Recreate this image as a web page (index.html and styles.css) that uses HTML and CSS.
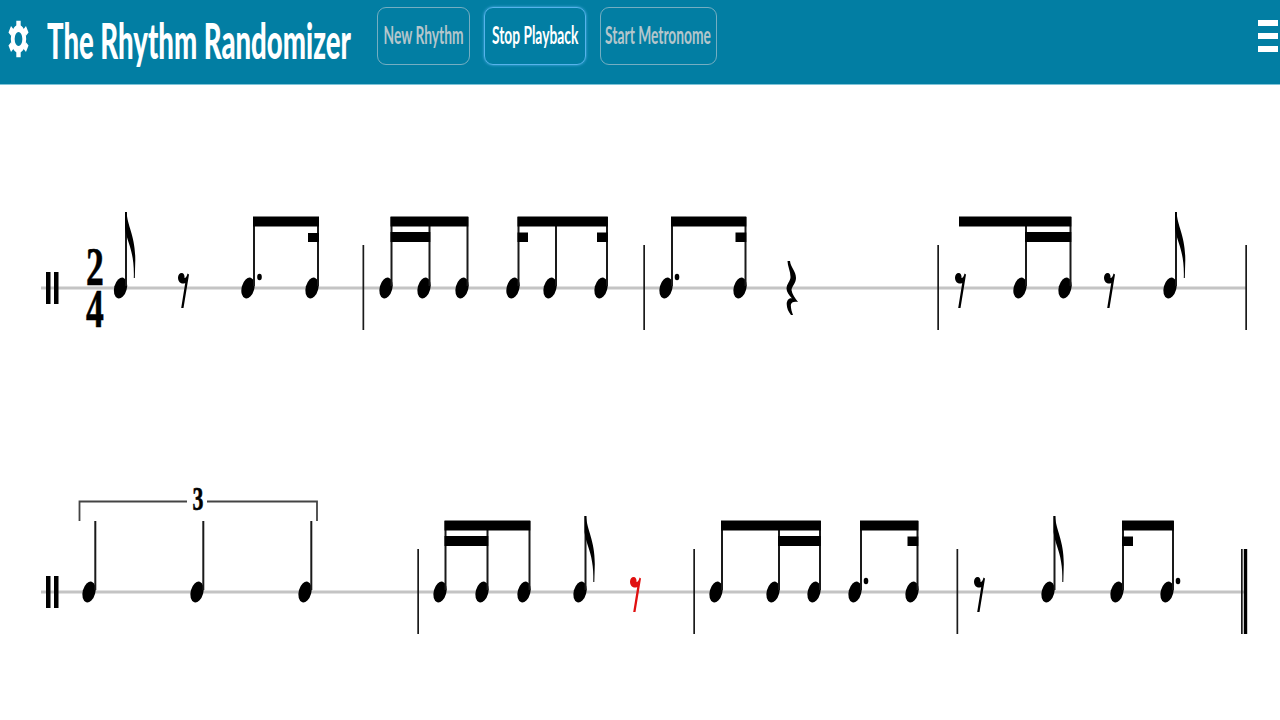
FILE: index.html
```html
<!DOCTYPE html>
<html lang="en">
<head>
    <meta charset="UTF-8">
    <meta name="viewport" content="width=device-width, initial-scale=1.0">
    <title>The Rhythm Randomizer</title>

    <link rel="stylesheet" href="styles.css">
</head>

<body>

<header class="topbar">
    <svg class="gear" viewBox="0 0 24 24" preserveAspectRatio="none">
        <circle cx="12" cy="12" r="6.6" fill="none" stroke="#fff" stroke-width="4.4"/>
        <path d="M12 4V.5M12 20v3.5M18.9 8l3.1-2.2M5.1 16L2 18.200M18.900 16l3.100 2.200M5.100 8L2 5.800" stroke="#fff" stroke-width="5" fill="none"/>
    </svg>
    <h1 class="title"><span>The Rhythm Randomizer</span></h1>
    <div class="actions">
        <button class="btn btn-new" type="button"><span>New Rhythm</span></button>
        <button class="btn btn-stop" type="button"><span>Stop Playback</span></button>
        <button class="btn btn-metro" type="button"><span>Start Metronome</span></button>
    </div>
    <div class="menu"><i></i><i></i><i></i></div>
</header>

<main>
<svg class="score" viewBox="0 85 1280 635">
    <defs>
        <ellipse id="head" cx="0" cy="0" rx="6.300" ry="10.600" transform="rotate(15)"/>
        <path id="flag" d="M-.8 0H.8C1.500 14 9.500 24 9.500 48L9 66H8C8.500 50 6 40 3 31 1.500 26 0 22 -.8 16Z"/>
        <path id="rest8" d="M0 4.500C0 1.800 1.800 0 3.500 0 5.800 0 6.800 2 6.500 5 7.800 5 9 3 9.500 .5L11 1.500 5.500 35H3.200L7.200 10C5 11.500 0 10.500 0 4.500Z"/>
        <path id="rest4" d="M.5 0L3 0C3.500 6 9 10 9 17 9 22 5 25 4.500 29 5 33 8 37 11 41 7.500 40 4 41 3.800 44 3.800 48 5 51 6 54H4C1.500 51 -.3 47 -.3 43 -.3 39 2.500 36.500 5 37.500 2 34 -.5 31 -.5 27.500 -.5 23 3.500 20 3.500 16 3.500 10 .5 5 .5 0Z"/>
        <g id="repeat">
            <rect x="46" y="272" width="4.500" height="32"/>
            <rect x="54" y="272" width="4.500" height="32"/>
        </g>
        <ellipse id="dot" cx="0" cy="0" rx="2.300" ry="3.200"/>
    </defs>

    <!-- first line -->
    <g class="line">
        <rect class="staff" x="41" y="286.500" width="1205" height="3"/>
        <use href="#repeat"/>
        <text class="digit" transform="translate(95,285) scale(.66,1)">2</text>
        <text class="digit" transform="translate(95,327) scale(.66,1)">4</text>

        <use href="#head" x="120.500" y="288"/>
        <rect class="stem" x="125" y="212" height="74"/>
        <use href="#flag" x="125.800" y="212"/>
        <use href="#rest8" x="178" y="273"/>

        <use href="#head" x="248" y="288"/><use href="#dot" x="259.500" y="277"/>
        <use href="#head" x="312" y="288"/>
        <rect class="stem" x="253" y="217" height="69"/>
        <rect class="stem" x="317" y="217" height="69"/>
        <rect x="253" y="216.500" width="66" height="10"/>
        <rect x="308" y="233" width="11" height="9"/>

        <rect class="bar" x="362.500" y="245" height="85"/>

        <use href="#head" x="386" y="288"/>
        <use href="#head" x="424" y="288"/>
        <use href="#head" x="462" y="288"/>
        <rect class="stem" x="390.500" y="217" height="69"/>
        <rect class="stem" x="428.500" y="217" height="69"/>
        <rect class="stem" x="466.500" y="217" height="69"/>
        <rect x="390.500" y="216.500" width="77.800" height="10"/>
        <rect x="390.500" y="232" width="39.800" height="10"/>

        <use href="#head" x="513" y="288"/>
        <use href="#head" x="550" y="288"/>
        <use href="#head" x="601" y="288"/>
        <rect class="stem" x="517.500" y="217" height="69"/>
        <rect class="stem" x="555" y="217" height="69"/>
        <rect class="stem" x="606" y="217" height="69"/>
        <rect x="517.500" y="216.500" width="90.300" height="10"/>
        <rect x="517.500" y="232.500" width="10.500" height="9.500"/>
        <rect x="597" y="232.500" width="10.800" height="9.500"/>

        <rect class="bar" x="643.300" y="245" height="85"/>

        <use href="#head" x="666" y="288"/><use href="#dot" x="677" y="277"/>
        <use href="#head" x="740" y="288"/>
        <rect class="stem" x="671" y="217" height="69"/>
        <rect class="stem" x="744.500" y="217" height="69"/>
        <rect x="671" y="216.500" width="75.300" height="10"/>
        <rect x="735.500" y="232.500" width="10.800" height="9.500"/>
        <use href="#rest4" x="787" y="261"/>

        <rect class="bar" x="937.300" y="245" height="85"/>

        <use href="#rest8" x="955" y="273"/>
        <use href="#head" x="1020" y="288"/>
        <use href="#head" x="1065" y="288"/>
        <rect class="stem" x="1025" y="217" height="69"/>
        <rect class="stem" x="1069.500" y="217" height="69"/>
        <rect x="959" y="216.500" width="112.300" height="10"/>
        <rect x="1025" y="232" width="46.300" height="10"/>
        <use href="#rest8" x="1104" y="273"/>
        <use href="#head" x="1170" y="288"/>
        <rect class="stem" x="1175" y="212" height="74"/>
        <use href="#flag" x="1175.800" y="212"/>

        <rect class="bar" x="1245.300" y="245" height="85"/>
    </g>

    <!-- second line -->
    <g class="line" transform="translate(0,304)">
        <rect class="staff" x="41" y="286.500" width="1205" height="3"/>
        <use href="#repeat"/>

        <path class="tuplet" d="M79.500 217V197.500H187M207 197.500H317V217"/>
        <text class="digit digit-small" transform="translate(198,206) scale(.66,1)">3</text>

        <use href="#head" x="89" y="288"/>
        <use href="#head" x="197" y="288"/>
        <use href="#head" x="305" y="288"/>
        <rect class="stem" x="94.300" y="217" height="69"/>
        <rect class="stem" x="202.300" y="217" height="69"/>
        <rect class="stem" x="310.300" y="217" height="69"/>

        <rect class="bar" x="417.300" y="245" height="85"/>

        <use href="#head" x="440" y="288"/>
        <use href="#head" x="482" y="288"/>
        <use href="#head" x="524" y="288"/>
        <rect class="stem" x="444.500" y="217" height="69"/>
        <rect class="stem" x="486.500" y="217" height="69"/>
        <rect class="stem" x="528.500" y="217" height="69"/>
        <rect x="444.500" y="216.500" width="85.800" height="10"/>
        <rect x="444.500" y="232" width="43.800" height="10"/>

        <use href="#head" x="580" y="288"/>
        <rect class="stem" x="584.500" y="212" height="74"/>
        <use href="#flag" x="585.300" y="212"/>
        <use href="#rest8" class="rest-active" x="630" y="273"/>

        <rect class="bar" x="693.300" y="245" height="85"/>

        <use href="#head" x="716" y="288"/>
        <use href="#head" x="773" y="288"/>
        <use href="#head" x="814" y="288"/>
        <rect class="stem" x="721" y="217" height="69"/>
        <rect class="stem" x="778" y="217" height="69"/>
        <rect class="stem" x="819" y="217" height="69"/>
        <rect x="721" y="216.500" width="99.800" height="10"/>
        <rect x="778" y="232" width="42.800" height="10"/>

        <use href="#head" x="855" y="288"/><use href="#dot" x="866" y="277"/>
        <use href="#head" x="912" y="288"/>
        <rect class="stem" x="860" y="217" height="69"/>
        <rect class="stem" x="916.500" y="217" height="69"/>
        <rect x="860" y="216.500" width="58.300" height="10"/>
        <rect x="907.500" y="232.500" width="10.800" height="9.500"/>

        <rect class="bar" x="956.500" y="245" height="85"/>

        <use href="#rest8" x="974" y="273"/>
        <use href="#head" x="1048" y="288"/>
        <rect class="stem" x="1053.500" y="212" height="74"/>
        <use href="#flag" x="1054.300" y="212"/>

        <use href="#head" x="1117" y="288"/>
        <use href="#head" x="1167" y="288"/><use href="#dot" x="1178" y="277"/>
        <rect class="stem" x="1122" y="217" height="69"/>
        <rect class="stem" x="1172" y="217" height="69"/>
        <rect x="1122" y="216.500" width="51.800" height="10"/>
        <rect x="1122" y="232.500" width="11" height="9.500"/>

        <rect class="bar" x="1241" y="245" height="85"/>
        <rect x="1243.800" y="245" width="3.400" height="85"/>
    </g>
</svg>
</main>

</body>
</html>
```

FILE: styles.css
```css
body {
    margin: 0;
    background-color: white;
    font-family: "Lato", "Open Sans", sans-serif;
    overflow: hidden;
}

/* header bar */
.topbar {
    display: flex;
    align-items: center;
    height: 84px;
    background-color: #027ea3;
    border-bottom: 1px solid #7fc4d8;
    padding-left: 8px;
    padding-right: 2px;
}

.gear {
    width: 21px;
    height: 38px;
    margin-top: -6px;
    flex-shrink: 0;
}

/* the reference text is squeezed sideways, so the spans get a scaleX */
.title {
    width: 304px;
    margin: -4px 0 0 18px;
    color: white;
    font-size: 50px;
    font-weight: 900;
    white-space: nowrap;
}

.title span {
    display: inline-block;
    transform: scaleX(.551);
    transform-origin: left center;
}

.actions {
    display: flex;
    gap: 14px;
    margin-left: 26px;
    margin-top: -13px;
}

.btn {
    display: flex;
    align-items: center;
    justify-content: center;
    height: 58px;
    padding: 0 0 3px;
    background: none;
    border: 1px solid #74aec2;
    border-radius: 9px;
    color: #b4c6cc;
    font-family: inherit;
    font-size: 24px;
    font-weight: 700;
    white-space: nowrap;
}

.btn span {
    flex-shrink: 0;
    transform: scaleX(.575);
}

.btn-new {
    width: 93px;
}

.btn-stop {
    width: 102px;
    color: white;
    border-color: #56b3ec;
    box-shadow: 0 0 3px #56b3ec;
}

.btn-metro {
    width: 117px;
}

.menu {
    display: flex;
    flex-direction: column;
    gap: 7px;
    margin-left: auto;
    margin-top: -12px;
}

.menu i {
    display: block;
    width: 20px;
    height: 6px;
    background-color: white;
}

/* score */
.score {
    display: block;
    width: 1280px;
    height: 635px;
}

.staff {
    fill: #c4c4c4;
}

.stem {
    width: 2px;
    fill: #1a1a1a;
}

.bar {
    width: 1.700px;
    fill: #1a1a1a;
}

.digit {
    font-family: "Liberation Serif", serif;
    font-size: 54px;
    font-weight: 700;
    text-anchor: middle;
    stroke: black;
    stroke-width: .6px;
}

.digit-small {
    font-size: 33px;
}

.tuplet {
    fill: none;
    stroke: #444;
    stroke-width: 1.800;
}

.rest-active {
    fill: #e01010;
}
```
